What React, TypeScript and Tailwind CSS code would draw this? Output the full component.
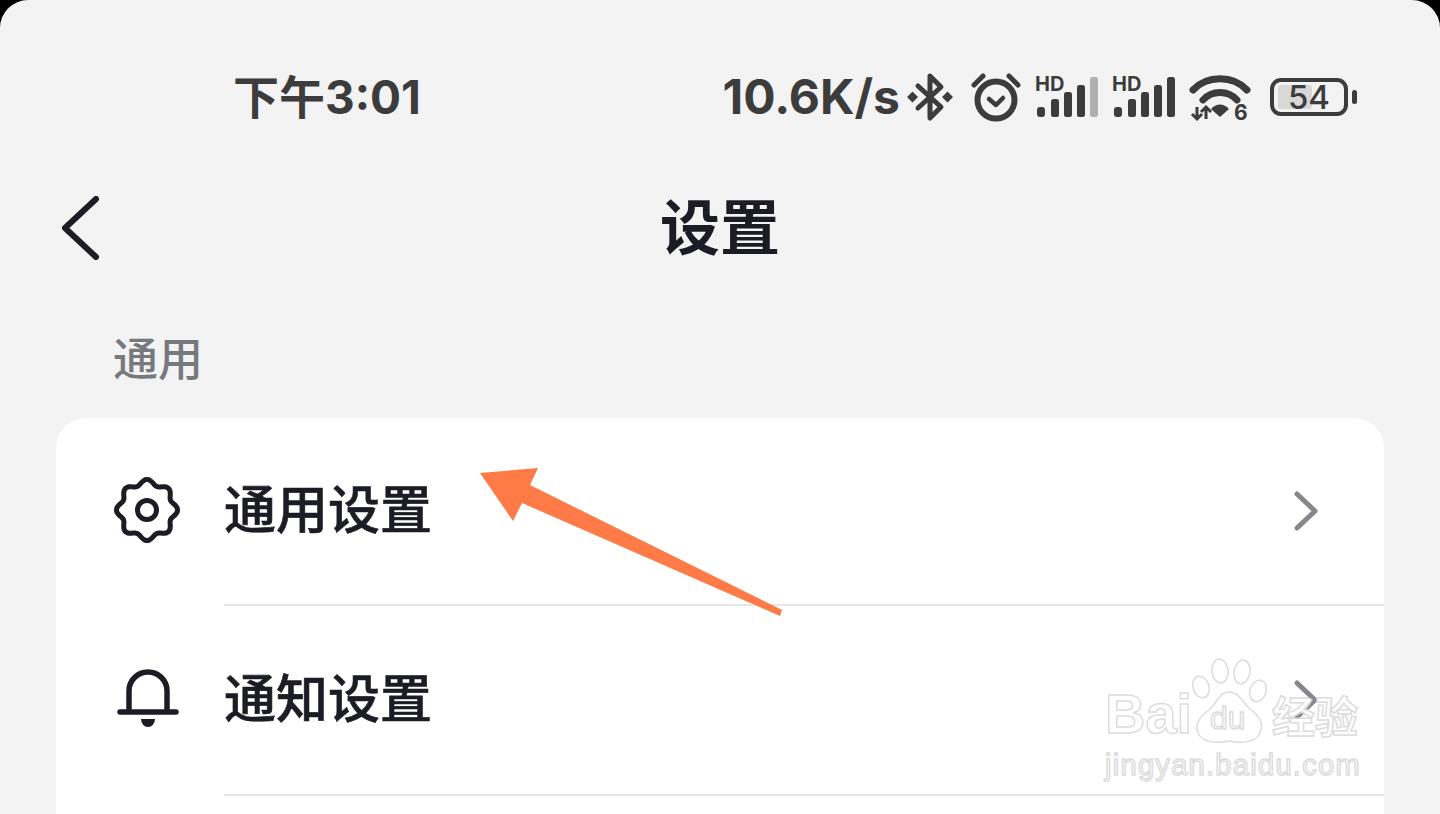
const cjk = "font-['Inter','Noto_Sans_CJK_SC',sans-serif]";

// eight soft lobes, same outline as the settings gear
const gearPoints = Array.from({ length: 96 }, (_, i) => {
  const a = (i / 96) * Math.PI * 2;
  const r = 28 + 2.6 * Math.cos(8 * a);
  return `${(33 + r * Math.sin(a)).toFixed(1)},${(33 - r * Math.cos(a)).toFixed(1)}`;
}).join(" ");

function GearIcon() {
  return (
    <svg width="66" height="66" viewBox="0 0 66 66" fill="none" stroke="#1c1d24" strokeWidth="5" strokeLinejoin="round">
      <polygon points={gearPoints} />
      <circle cx="33" cy="33" r="9.5" />
    </svg>
  );
}

function BellIcon() {
  return (
    <svg width="66" height="66" viewBox="0 0 66 66" fill="none">
      <path d="M6 46H62M15 46V25a19 19 0 0 1 38 0V46" stroke="#1c1d24" strokeWidth="5.5" strokeLinecap="round" />
      <path d="M27 53H41a7 8 0 0 1-14 0z" fill="#1c1d24" />
    </svg>
  );
}

function RowChevron() {
  return (
    <svg width="28" height="42" viewBox="0 0 28 42" fill="none">
      <path d="M5 4L23 21L5 38" stroke="#85878d" strokeWidth="5" strokeLinecap="round" strokeLinejoin="round" />
    </svg>
  );
}

function BluetoothIcon() {
  return (
    <svg width="46" height="50" viewBox="0 0 46 50" fill="none">
      <path d="M11 14L34 35L23 46V4L34 15L11 36" stroke="#3c3c3c" strokeWidth="5" strokeLinejoin="round" strokeLinecap="round" />
      <path d="M0 25L5.5 19.5L11 25L5.5 30.5zM35 25L40.5 19.5L46 25L40.5 30.5z" fill="#3c3c3c" />
    </svg>
  );
}

function AlarmIcon() {
  return (
    <svg width="50" height="50" viewBox="0 0 50 50" fill="none" stroke="#3c3c3c" strokeLinecap="round" strokeLinejoin="round">
      <circle cx="25" cy="28" r="18.5" strokeWidth="6" />
      <path d="M18 27L25 33L32 26" strokeWidth="4.5" />
      <path d="M3 13L12 4M47 13L38 4" strokeWidth="5" />
    </svg>
  );
}

function SignalIcon({ lastBar }: { lastBar: string }) {
  return (
    <svg className="overflow-visible" width="64" height="42" viewBox="0 0 64 42" fill="#3c3c3c">
      <text x="1" y="15" fontFamily="Inter, sans-serif" fontSize="20" fontWeight="700">HD</text>
      <rect x="3" y="31" width="8" height="10" rx="3" />
      <rect x="17" y="23" width="8" height="18" rx="2.5" />
      <rect x="30" y="16" width="8" height="25" rx="2.5" />
      <rect x="43" y="9" width="8" height="32" rx="2.5" />
      <rect x="56" y="1" width="8" height="40" rx="2.5" fill={lastBar} />
    </svg>
  );
}

function WifiIcon() {
  return (
    <svg className="overflow-visible" width="60" height="48" viewBox="0 0 60 48" fill="none">
      <path d="M3 17C17 2 43 2 57 17" stroke="#3c3c3c" strokeWidth="7" strokeLinecap="round" />
      <path d="M13 27C22 17 38 17 47 27" stroke="#3c3c3c" strokeWidth="7" strokeLinecap="round" />
      <path d="M21 36C26 30 34 30 39 36L30 44z" fill="#3c3c3c" />
      <path d="M7 34V46M2 41L7 46L12 41M16 46V34M11 39L16 34L21 39" stroke="#3c3c3c" strokeWidth="3" />
      <text x="44" y="47" fontFamily="Inter, sans-serif" fontSize="21" fontWeight="700" fill="#3c3c3c">6</text>
    </svg>
  );
}

function Battery() {
  return (
    <div className="flex items-center gap-[4px]">
      <div className="relative flex h-[38px] w-[78px] items-center justify-center rounded-[11px] border-[4px] border-[#3c3c3c] font-['Inter',sans-serif] text-[33px] font-medium leading-none text-[#3c3c3c]">
        <div className="absolute bottom-[3px] left-[4px] top-[3px] w-[34px] rounded-[3px] bg-[#d8d8d8]" />
        <span className="relative">54</span>
      </div>
      <div className="h-[14px] w-[5px] rounded-full bg-[#3c3c3c]" />
    </div>
  );
}

function StatusBar() {
  return (
    <div className="mt-[72px] flex h-[50px] items-center justify-between pl-[233px] pr-[83px] text-[#3c3c3c]">
      <span className={`${cjk} text-[46px] font-bold leading-none`}>下午3:01</span>
      <div className="flex items-center">
        <span className="mr-[7px] font-['Inter',sans-serif] text-[48px] font-bold leading-none">10.6K/s</span>
        <BluetoothIcon />
        <div className="ml-[18px]"><AlarmIcon /></div>
        <div className="ml-[13px]"><SignalIcon lastBar="#b0b0b0" /></div>
        <div className="ml-[13px]"><SignalIcon lastBar="#3c3c3c" /></div>
        <div className="ml-[15px]"><WifiIcon /></div>
        <div className="ml-[20px]"><Battery /></div>
      </div>
    </div>
  );
}

function Row({ label, icon, height }: { label: string; icon: React.ReactNode; height: string }) {
  return (
    <div className={`flex items-center ${height}`}>
      <div className="-mt-[4px] ml-[58px] w-[66px]">{icon}</div>
      <div className="ml-[44px] flex h-full flex-1 items-center justify-between border-b-2 border-[#e6e6e6] pr-[64px]">
        <span className={`${cjk} text-[52px] font-medium leading-none text-[#1c1d24] [-webkit-text-stroke:0.6px_#1c1d24]`}>{label}</span>
        <RowChevron />
      </div>
    </div>
  );
}

function ArrowMark() {
  return (
    <svg className="absolute left-[470px] top-[460px]" width="320" height="165" viewBox="470 460 320 165">
      <polygon points="480,473 538,468 530,485 782,610 780,616 522,503 513,521" fill="#fe7a46" />
    </svg>
  );
}

function Watermark() {
  const outline = "[-webkit-text-stroke:1.5px_#d9d9d9] text-white font-['Liberation_Sans',sans-serif]";
  return (
    <div className="absolute left-[1105px] top-[658px] flex h-[130px] w-[262px] flex-col opacity-90">
      <div className="flex h-[88px] items-end">
        <span className={`${outline} w-[85px] text-[56px] font-bold leading-[64px]`}>Bai</span>
        <div className="relative h-[88px] w-[80px] shrink-0">
          <svg className="absolute inset-0" width="80" height="88" viewBox="0 0 80 88" fill="#fff" stroke="#d9d9d9" strokeWidth="1.5">
            <ellipse cx="11" cy="29" rx="8" ry="11" transform="rotate(-18 11 29)" />
            <ellipse cx="30" cy="13" rx="8" ry="12" transform="rotate(-6 30 13)" />
            <ellipse cx="52" cy="14" rx="8" ry="12" transform="rotate(10 52 14)" />
            <ellipse cx="68" cy="33" rx="8" ry="11" transform="rotate(18 68 33)" />
            <path d="M39 34C49 34 52 44 60 51C70 58 74 66 70 75C65 86 50 85 39 83C28 85 13 86 8 75C4 66 10 58 20 51C27 45 29 34 39 34z" />
          </svg>
          <span className={`${outline} absolute bottom-[12px] left-[20px] text-[32px] font-normal leading-none [-webkit-text-stroke-width:1px]`}>du</span>
        </div>
        <span className={`${cjk} ml-[2px] whitespace-nowrap text-[43px] font-bold leading-[58px] text-white [-webkit-text-stroke:1.5px_#d9d9d9]`}>经验</span>
      </div>
      <span className={`${outline} mt-[2px] whitespace-nowrap text-[29px] font-normal leading-[34px] tracking-[1.3px] [-webkit-text-stroke-width:1px]`}>jingyan.baidu.com</span>
    </div>
  );
}

export default function App() {
  return (
    <div className="relative h-[814px] w-[1440px] overflow-hidden bg-black">
      <div className="flex h-full flex-col rounded-t-[28px] bg-[#f3f3f3]">
        <StatusBar />

        <div className="mt-[74px] grid h-[64px] grid-cols-[1fr_auto_1fr] items-center pl-[60px]">
          <svg width="40" height="64" viewBox="0 0 40 64" fill="none">
            <path d="M36 3L5 32L36 61" stroke="#1c1d24" strokeWidth="6" strokeLinecap="round" strokeLinejoin="round" />
          </svg>
          <h1 className={`${cjk} -ml-[60px] text-[60px] font-bold leading-none text-[#1c1d24]`}>设置</h1>
        </div>

        <div className={`${cjk} ml-[113px] mt-[70px] h-[60px] text-[45px] font-medium leading-[60px] text-[#77797f]`}>通用</div>

        <div className="mx-[56px] mt-[28px] flex-1 rounded-t-[30px] bg-white">
          <Row label="通用设置" icon={<GearIcon />} height="h-[188px]" />
          <Row label="通知设置" icon={<BellIcon />} height="h-[190px]" />
        </div>
      </div>

      <ArrowMark />
      <Watermark />
    </div>
  );
}
